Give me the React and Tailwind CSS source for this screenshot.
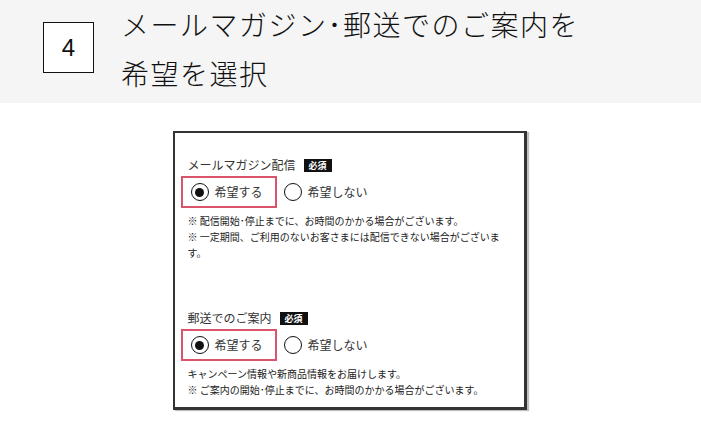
const jp = { fontFamily: '"Noto Sans CJK JP", "Noto Sans", sans-serif' }

const Radio = ({ checked, label, boxed }) => (
  <div
    className={
      boxed
        ? 'flex items-center h-[32px] w-[96px] border-2 border-[#d9546c] pl-[8px] gap-[6px]'
        : 'flex items-center h-[32px] pl-[7px] gap-[6px]'
    }
  >
    <span className="w-[18px] h-[18px] rounded-full border-[1.5px] border-[#111] flex items-center justify-center bg-white">
      {checked && <span className="w-[9px] h-[9px] rounded-full bg-[#111]" />}
    </span>
    <span className="text-[12px] text-[#333] leading-none">{label}</span>
  </div>
)

const Badge = () => (
  <span className="bg-[#111] text-white text-[9px] leading-none px-[5px] py-[2px] font-bold">必須</span>
)

const Section = ({ title, notes }) => (
  <div>
    <div className="flex items-center gap-[8px] text-[12px] text-[#333] h-[16px]">
      <span>{title}</span>
      <Badge />
    </div>
    <div className="flex items-center mt-[3px] -ml-[7px]">
      <Radio checked label="希望する" boxed />
      <Radio label="希望しない" />
    </div>
    <div className="mt-[5px] text-[10px] text-[#222] leading-[16px] pr-[8px]">
      {notes.map((n, i) => (
        <p key={i}>{n}</p>
      ))}
    </div>
  </div>
)

export default function App() {
  return (
    <div className="w-[701px] h-[440px] bg-white" style={jp}>
      {/* step header */}
      <div className="bg-[#f5f5f5] h-[103px] flex items-start pl-[43px] pt-[22px]">
        <div
          className="w-[51px] h-[51px] border-[1.5px] border-[#111] bg-white flex items-center justify-center text-[24px] text-[#111]"
          style={{ fontFamily: '"Liberation Sans", sans-serif' }}
        >
          4
        </div>
        <div className="ml-[27px] -mt-[22px] text-[28px] leading-[49px] text-[#111] font-light tracking-[1.5px]">
          <p>メールマガジン･郵送でのご案内を</p>
          <p>希望を選択</p>
        </div>
      </div>

      {/* form card */}
      <div className="flex justify-center pt-[28px]">
        <div className="ml-[-2px] w-[354px] h-[279px] border-2 border-[#333] border-r-[3px] border-b-[3px] shadow-[2px_1px_1px_rgba(0,0,0,0.25)] bg-white px-[7px] pt-[24px] flex flex-col">
          <div className="pl-[6px]">
            <Section
              title="メールマガジン配信"
              notes={[
                '※ 配信開始･停止までに、お時間のかかる場合がございます。',
                '※ 一定期間、ご利用のないお客さまには配信できない場合がございます。',
              ]}
            />
          </div>
          <div className="pl-[6px] mt-[49px]">
            <Section
              title="郵送でのご案内"
              notes={[
                'キャンペーン情報や新商品情報をお届けします。',
                '※ ご案内の開始･停止までに、お時間のかかる場合がございます。',
              ]}
            />
          </div>
        </div>
      </div>
    </div>
  )
}
